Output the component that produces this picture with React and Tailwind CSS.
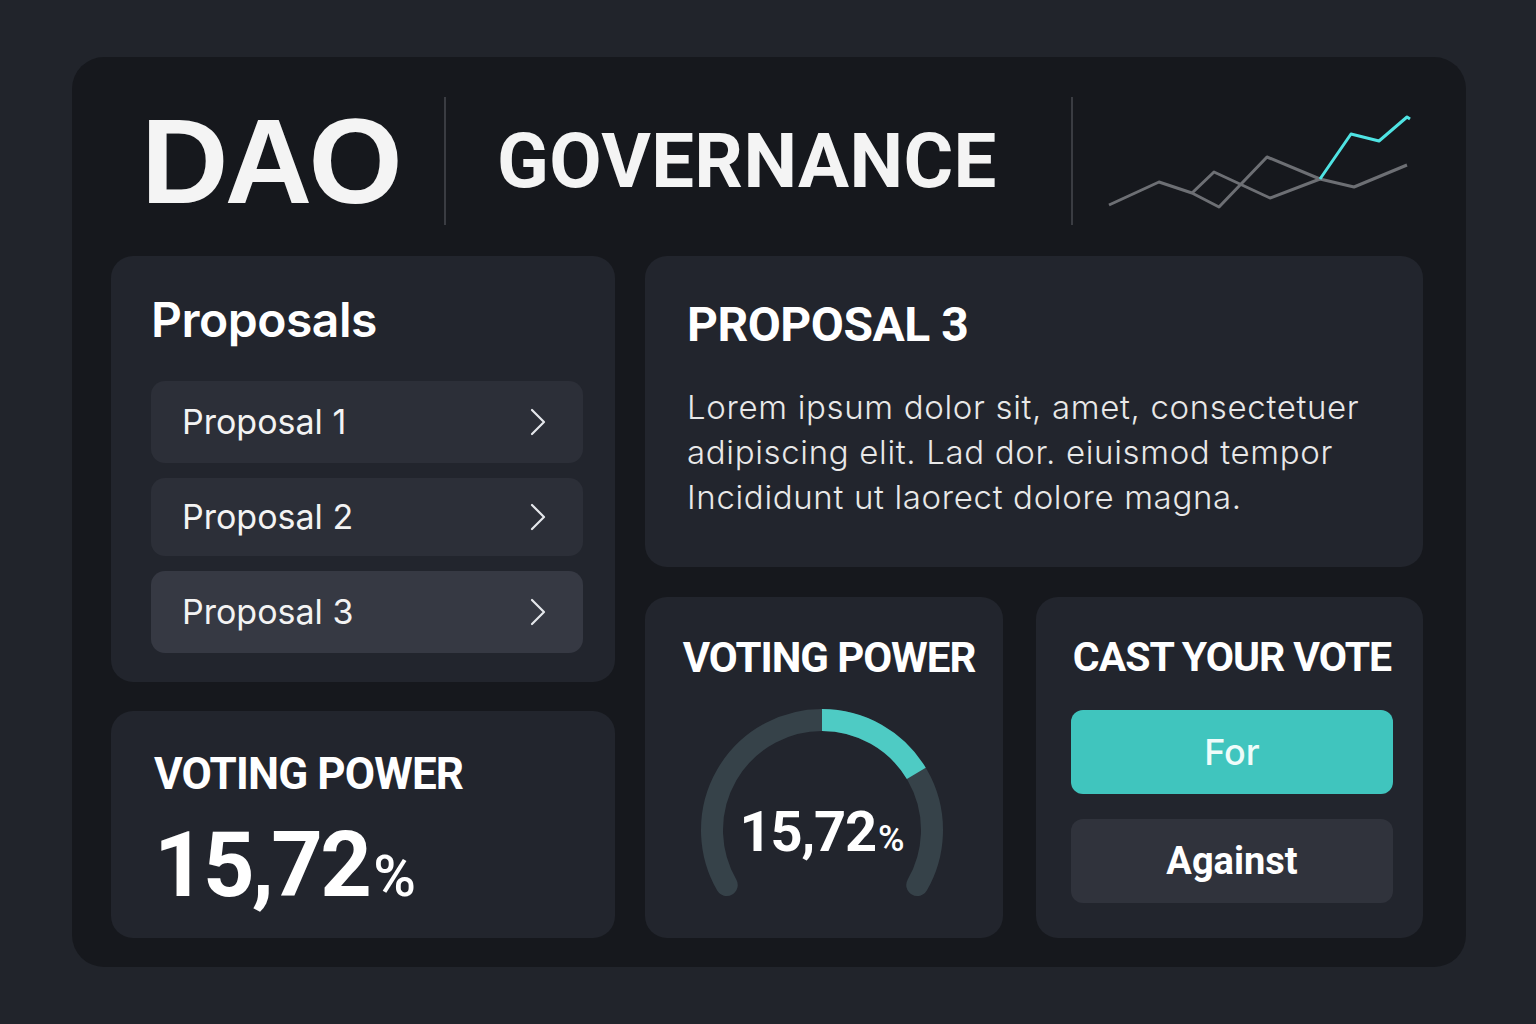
import React from "react";

function Chevron() {
  return (
    <svg width="18" height="28" viewBox="0 0 18 28" fill="none">
      <path d="M3 2 L15 14 L3 26" stroke="#e5e7eb" strokeWidth="2.2" strokeLinecap="round" strokeLinejoin="round" />
    </svg>
  );
}

function Chart() {
  const ox = 1102, oy = 110;
  const pts = (arr) => arr.map(([x, y]) => `${x - ox},${y - oy}`).join(" ");
  return (
    <svg width="310" height="105" viewBox="0 0 310 105" fill="none">
      <polyline points={pts([[1107,206],[1157,183],[1190,194],[1217,208],[1265,158],[1318,180],[1352,188],[1405,166]])} stroke="#6d6f74" strokeWidth="3" strokeLinejoin="round" />
      <polyline points={pts([[1190,194],[1212,173],[1268,199],[1318,180]])} stroke="#6d6f74" strokeWidth="3" strokeLinejoin="round" />
      <polyline points={pts([[1318,180],[1349,135],[1377,142],[1405,118],[1408,120]])} stroke="#4fe3e3" strokeWidth="3" strokeLinejoin="round" />
    </svg>
  );
}

function polar(cx, cy, r, deg) {
  const a = ((deg - 90) * Math.PI) / 180;
  return [cx + r * Math.cos(a), cy + r * Math.sin(a)];
}
function arcPath(cx, cy, r, a0, a1) {
  const [x0, y0] = polar(cx, cy, r, a0);
  const [x1, y1] = polar(cx, cy, r, a1);
  const large = a1 - a0 > 180 ? 1 : 0;
  return `M ${x0} ${y0} A ${r} ${r} 0 ${large} 1 ${x1} ${y1}`;
}

function Gauge() {
  const cx = 130, cy = 130, r = 110;
  return (
    <svg width="260" height="230" viewBox="0 0 260 230" fill="none">
      <path d={arcPath(cx, cy, r, -120, 120)} stroke="#364249" strokeWidth="22" strokeLinecap="round" />
      <path d={arcPath(cx, cy, r, 0, 59)} stroke="#4ecbc4" strokeWidth="22" strokeLinecap="butt" />
    </svg>
  );
}

const head = { fontFamily: "Roboto, 'Liberation Sans', sans-serif" };
const inter = { fontFamily: "Inter, 'Noto Sans', sans-serif" };

export default function App() {
  return (
    <div className="min-h-screen w-full bg-[#21242b] pt-[57px] pl-[72px]" style={inter}>
      <div className="w-[1394px] h-[910px] rounded-[32px] bg-[#16181d] px-[39px] pt-[40px] flex flex-col">
        {/* header */}
        <div className="h-[128px] flex items-center">
          <div className="w-[333px] h-full flex items-center pl-[30px]">
            <span className="text-[121px] font-bold text-[#f4f4f4] tracking-[-0.03em] leading-none" style={{ fontFamily: "'Liberation Sans', Arial, sans-serif" }}>DAO</span>
          </div>
          <div className="w-[2px] h-full bg-[#3a3c42]" />
          <div className="w-[625px] h-full flex items-center pl-[51px]">
            <span className="text-[76px] font-bold text-[#f4f4f4] tracking-[0.005em] leading-none" style={head}>GOVERNANCE</span>
          </div>
          <div className="w-[2px] h-full bg-[#3a3c42]" />
          <div className="ml-[31px] h-full flex items-center">
            <Chart />
          </div>
        </div>

        {/* grid */}
        <div className="mt-[31px] flex gap-[30px]">
          <div className="w-[504px] flex flex-col gap-[29px]">
            <div className="h-[426px] rounded-[22px] bg-[#22252d] pl-[40px] pr-[32px] pt-[35px]">
              <div className="text-[48px] font-semibold text-white leading-[1.2] tracking-[-0.01em]">Proposals</div>
              <div className="mt-[32px] flex flex-col gap-[15px]">
                {[
                  ["Proposal 1", "h-[82px] bg-[#2c2f38]"],
                  ["Proposal 2", "h-[78px] bg-[#2c2f38]"],
                  ["Proposal 3", "h-[82px] bg-[#363943]"],
                ].map(([t, c]) => (
                  <div key={t} className={`${c} rounded-[14px] flex items-center justify-between pl-[31px] pr-[36px]`}>
                    <span className="text-[34px] text-[#f3f3f3] leading-none">{t}</span>
                    <Chevron />
                  </div>
                ))}
              </div>
            </div>
            <div className="h-[227px] rounded-[22px] bg-[#22252d] pl-[43px] pt-[37px]">
              <div className="text-[44px] font-bold text-white leading-[1.2] tracking-[-0.02em]" style={head}>VOTING POWER</div>
              <div className="mt-[20px] flex items-baseline text-white" style={head}>
                <span className="text-[90px] font-bold leading-none tracking-[-0.03em]">15,72</span>
                <span className="text-[58px] font-medium leading-none ml-[4px]">%</span>
              </div>
            </div>
          </div>

          <div className="w-[778px] flex flex-col gap-[30px]">
            <div className="h-[311px] rounded-[22px] bg-[#22252d] pl-[42px] pr-[30px] pt-[40px]">
              <div className="text-[48px] font-bold text-white leading-[1.2] tracking-[-0.01em]" style={head}>PROPOSAL 3</div>
              <p className="mt-[31px] text-[33px] font-light text-[#e8e8e8] leading-[45px] tracking-[0.02em]">
                Lorem ipsum dolor sit, amet, consectetuer adipiscing elit. Lad dor. eiuismod tempor Incididunt ut laorect dolore magna.
              </p>
            </div>
            <div className="h-[341px] flex gap-[33px]">
              <div className="w-[358px] rounded-[22px] bg-[#22252d] flex flex-col items-center pt-[36px]">
                <div className="text-[42px] font-bold text-white leading-[1.2] tracking-[-0.025em] ml-[10px]" style={head}>VOTING POWER</div>
                <div className="relative mt-[17px] -ml-[4px]">
                  <Gauge />
                  <div className="absolute left-0 right-0 top-[104px] flex justify-center items-baseline text-white" style={head}>
                    <span className="text-[56px] font-bold leading-none tracking-[-0.02em]">15,72</span>
                    <span className="text-[36px] font-medium leading-none ml-[2px]">%</span>
                  </div>
                </div>
              </div>
              <div className="w-[387px] rounded-[22px] bg-[#22252d] pl-[35px] pr-[30px] pt-[36px] flex flex-col items-center">
                <div className="text-[41px] font-bold text-white leading-[1.2] tracking-[-0.025em] whitespace-nowrap" style={head}>CAST YOUR VOTE</div>
                <div className="mt-[28px] w-full h-[84px] rounded-[12px] bg-[#40c5be] flex items-center justify-center">
                  <span className="text-[36px] font-medium text-[#effcfa] leading-none">For</span>
                </div>
                <div className="mt-[25px] w-full h-[84px] rounded-[12px] bg-[#30333c] flex items-center justify-center">
                  <span className="text-[38px] font-bold text-white leading-none" style={head}>Against</span>
                </div>
              </div>
            </div>
          </div>
        </div>
      </div>
    </div>
  );
}
